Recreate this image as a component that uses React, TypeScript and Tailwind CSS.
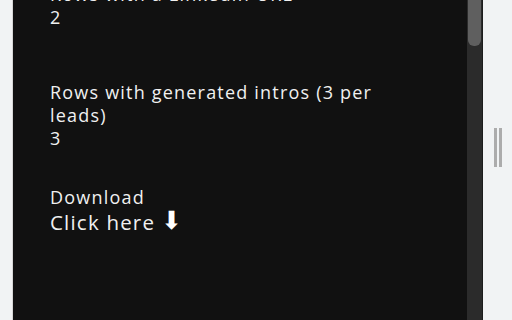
export default function App() {
  return (
    <div className="flex h-[320px] w-[512px] overflow-hidden bg-[#f1f3f4]" style={{ fontFamily: '"Open Sans", sans-serif' }}>
      <div className="w-[13px] shrink-0 border-r border-[#d6d6d6] bg-[#f1f3f4]" />
      <div className="flex flex-1 bg-[#111111]">
        <div className="flex-1 overflow-hidden pl-[37px]">
          <div className="-mt-[17.5px] w-[360px] text-[18px] leading-[23px] tracking-[1.2px] text-[#f0f0f0]">
            <div>Rows with a LinkedIn URL</div>
            <div>2</div>
            <div className="mt-[52px]">Rows with generated intros (3 per leads)</div>
            <div>3</div>
            <div className="mt-[36px]">Download</div>
            <div className="flex h-[26px] items-center text-[20.5px] leading-[26px] tracking-[1.2px]">
              <span>Click here</span>
              <span className="ml-[6px] -mt-[2px] text-[25px] leading-[26px] text-white" style={{ fontFamily: '"DejaVu Sans", sans-serif' }}>⬇</span>
            </div>
          </div>
        </div>
        <div className="w-[15px] shrink-0 bg-[#2b2b2b]">
          <div className="mx-auto h-[46px] w-[13px] rounded-b-[6px] bg-[#5f5f5f]" />
        </div>
      </div>
      <div className="flex w-[30px] shrink-0 justify-center border-l border-[#1c1c1c] bg-[#f1f3f4] pt-[128px]">
        <div className="flex gap-[2px]">
          <div className="h-[39px] w-[3px] bg-[#acacac]" />
          <div className="h-[39px] w-[3px] bg-[#acacac]" />
        </div>
      </div>
    </div>
  );
}
